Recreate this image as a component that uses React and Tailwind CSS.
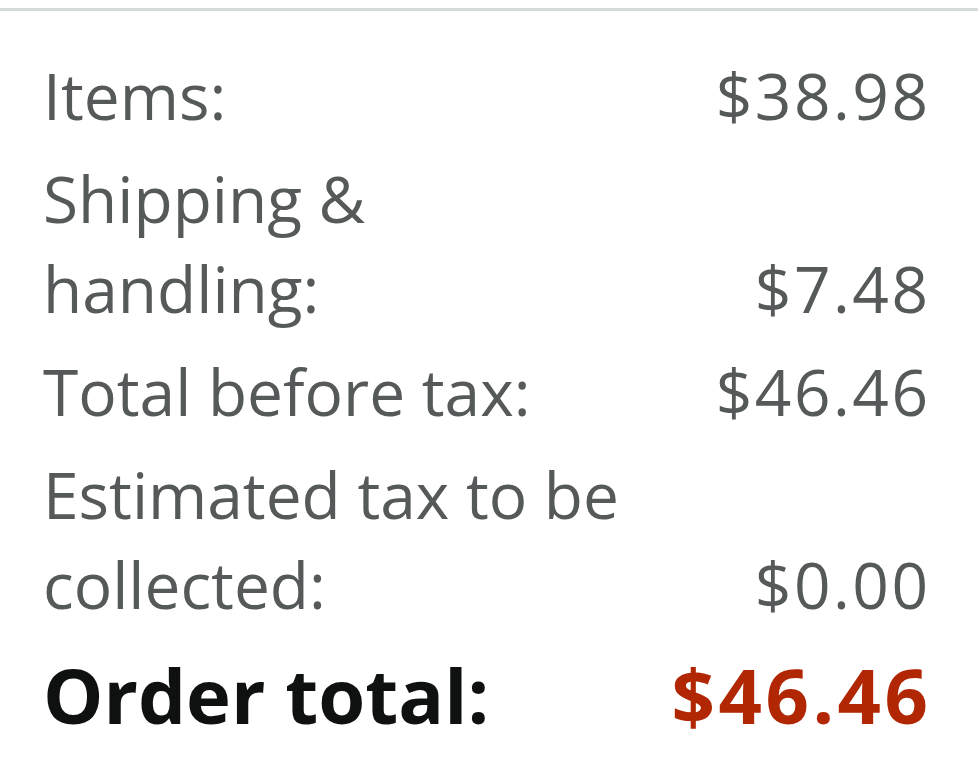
import React from "react";

const rows = [
  { label: "Items:", value: "$38.98" },
  { label: "Shipping & handling:", value: "$7.48" },
  { label: "Total before tax:", value: "$46.46" },
  { label: "Estimated tax to be collected:", value: "$0.00" },
];

export default function App() {
  return (
    <div
      className="w-[978px] h-[768px] bg-white overflow-hidden"
      style={{ fontFamily: '"Open Sans", "Noto Sans", Arial, sans-serif' }}
    >
      <div className="mt-2 border-t-[3px] border-[#d5d9d9]" />
      <div className="pl-[43px] pr-[50px] pt-[40px] flex flex-col gap-[13px]">
        {rows.map((r) => (
          <div key={r.label} className="flex items-end justify-between text-[64px] leading-[90px] text-[#565959]">
            <div className="w-[600px]">{r.label}</div>
            <div className="text-right whitespace-nowrap tracking-[2.5px] -mr-[2.5px]">{r.value}</div>
          </div>
        ))}
        <div className="flex items-end justify-between text-[76px] leading-[100px] font-bold mt-[2px]">
          <div className="text-[#0f1111]">Order total:</div>
          <div className="text-[#b12704] whitespace-nowrap tracking-[3.5px] -mr-[3.5px]">$46.46</div>
        </div>
      </div>
    </div>
  );
}
